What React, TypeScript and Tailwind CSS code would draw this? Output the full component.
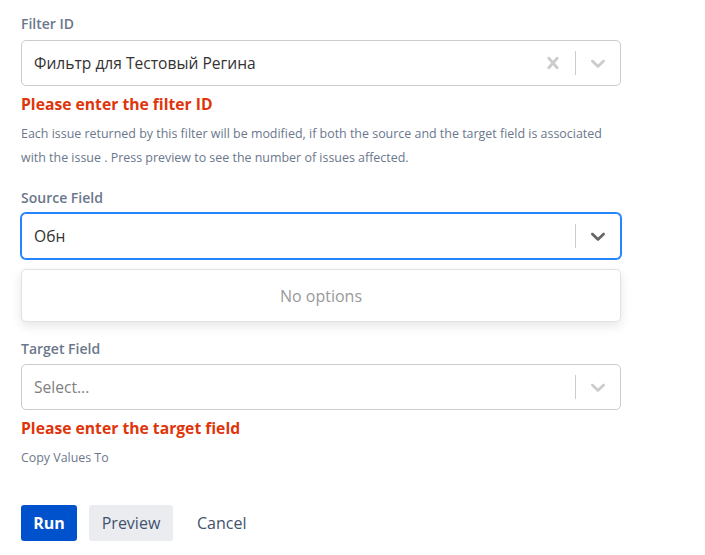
import React from "react";

const font = { fontFamily: '"Open Sans", "Noto Sans", Arial, sans-serif' };

function Chevron({ dark }: { dark?: boolean }) {
  return (
    <svg viewBox="0 0 20 20" className={`h-6 w-6 ${dark ? "fill-[#666666]" : "fill-[#cccccc]"}`}>
      <path d="M4.516 7.548c0.436-0.446 1.043-0.481 1.576 0l3.908 3.747 3.908-3.747c0.533-0.481 1.141-0.446 1.574 0 0.436 0.445 0.408 1.197 0 1.615-0.406 0.418-4.695 4.502-4.695 4.502-0.217 0.223-0.502 0.335-0.787 0.335s-0.57-0.112-0.789-0.335c0 0-4.287-4.084-4.695-4.502s-0.436-1.17 0-1.615z" />
    </svg>
  );
}

function Cross() {
  return (
    <svg viewBox="0 0 20 20" className="h-6 w-6 fill-[#cccccc]">
      <path d="M14.348 14.849c-0.469 0.469-1.229 0.469-1.697 0l-2.651-3.030-2.651 3.029c-0.469 0.469-1.229 0.469-1.697 0-0.469-0.469-0.469-1.229 0-1.697l2.758-3.15-2.759-3.152c-0.469-0.469-0.469-1.228 0-1.697s1.228-0.469 1.697 0l2.652 3.031 2.651-3.031c0.469-0.469 1.228-0.469 1.697 0s0.469 1.229 0 1.697l-2.758 3.152 2.758 3.15c0.469 0.469 0.469 1.229 0 1.698z" />
    </svg>
  );
}

/** react-select style control */
function SelectBox({
  value,
  placeholder,
  focused,
  clearable,
}: {
  value?: string;
  placeholder?: string;
  focused?: boolean;
  clearable?: boolean;
}) {
  return (
    <div
      className={`flex h-[46px] w-[600px] items-center rounded-[5px] border bg-white ${
        focused ? "border-[#2684ff] ring-1 ring-[#2684ff]" : "border-[#cccccc]"
      }`}
    >
      <div className="flex-1 truncate pl-[12px] pt-px text-[15.6px]">
        {value ? (
          <span className="text-[#333333]">{value}</span>
        ) : (
          <span className="text-[#808080]">{placeholder}</span>
        )}
      </div>
      {clearable && (
        <div className="flex h-full items-center px-[10px]">
          <Cross />
        </div>
      )}
      <span className="h-6 w-px bg-[#cccccc]" />
      <div className="flex h-full items-center px-[10px]">
        <Chevron dark={focused} />
      </div>
    </div>
  );
}

function Label({ children }: { children: React.ReactNode }) {
  return <div className="h-5 text-[14px] font-semibold leading-5 text-[#6b778c]">{children}</div>;
}

function ErrorText({ children }: { children: React.ReactNode }) {
  return <div className="mt-[6px] text-[15.7px] font-bold leading-6 text-[#de350b]">{children}</div>;
}

export default function App() {
  return (
    <div className="min-h-[555px] bg-white pl-[21px] pt-[14px]" style={font}>
      {/* Filter ID */}
      <Label>Filter ID</Label>
      <div className="mt-[6px]">
        <SelectBox value="Фильтр для Тестовый Регина" clearable />
      </div>
      <ErrorText>Please enter the filter ID</ErrorText>
      <p className="mt-[6px] w-[620px] whitespace-nowrap text-[12.45px] leading-6 text-[#6b778c]">
        Each issue returned by this filter will be modified, if both the source and the target field is associated
        <br />
        with the issue . Press preview to see the number of issues affected.
      </p>

      {/* Source Field */}
      <div className="mt-[18px]">
        <Label>Source Field</Label>
      </div>
      <div className="mt-[5px]">
        <SelectBox value="Обн" focused />
      </div>
      <div className="mt-[10px] flex h-[53px] w-[600px] items-center justify-center rounded-[5px] border border-[#e2e2e2] bg-white text-[16px] text-[#999999] shadow-[0_4px_11px_rgba(0,0,0,0.1)]">
        No options
      </div>

      {/* Target Field */}
      <div className="mt-[17px]">
        <Label>Target Field</Label>
      </div>
      <div className="mt-[5px]">
        <SelectBox placeholder="Select..." />
      </div>
      <ErrorText>Please enter the target field</ErrorText>
      <div className="mt-[6px] text-[12.4px] leading-6 text-[#6b778c]">Copy Values To</div>

      {/* Actions */}
      <div className="mt-[35px] flex items-center gap-3">
        <button className="h-9 w-14 rounded-[3px] bg-[#0052cc] text-[16px] font-bold text-white">Run</button>
        <button className="h-9 w-[84px] rounded-[3px] bg-[#ebecf0] text-[16px] text-[#42526e]">Preview</button>
        <button className="h-9 px-3 text-[16px] text-[#42526e]">Cancel</button>
      </div>
    </div>
  );
}
